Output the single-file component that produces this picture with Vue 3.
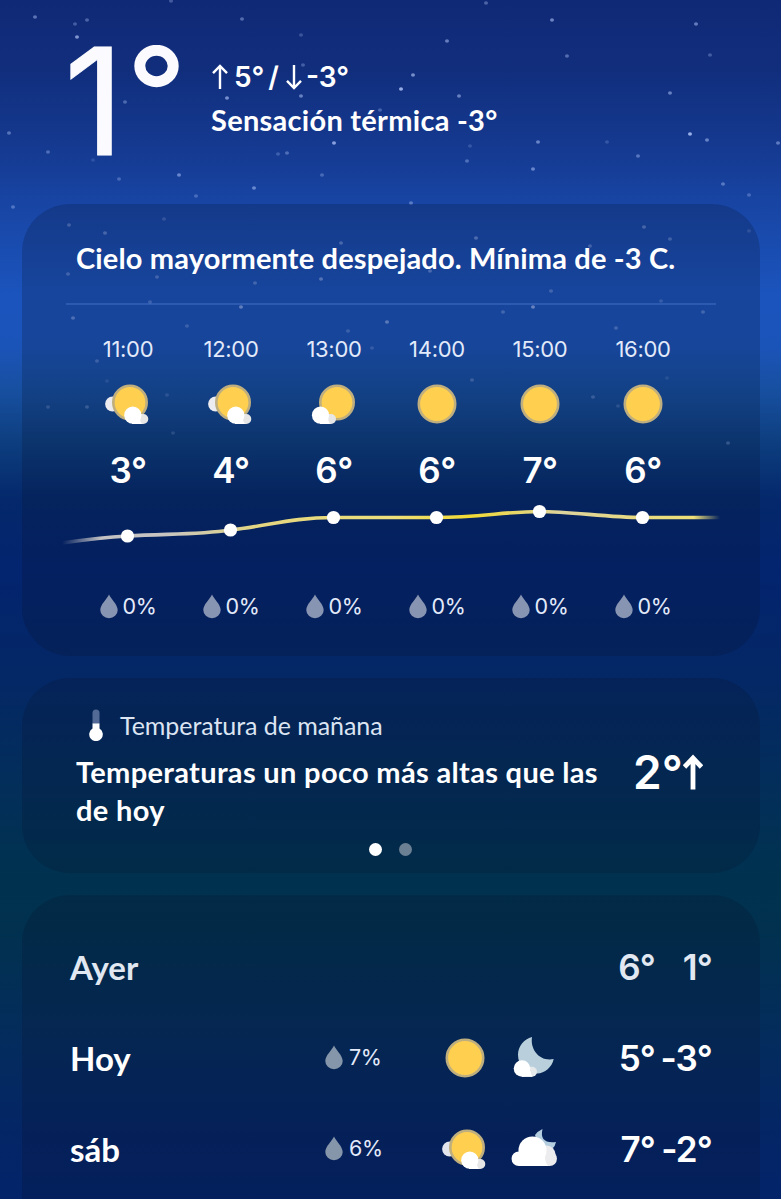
<script setup>
const hours = [
  { time: '11:00', icon: 'partly', temp: '3°', rain: '0%', y: 43 },
  { time: '12:00', icon: 'partly', temp: '4°', rain: '0%', y: 37 },
  { time: '13:00', icon: 'mostly', temp: '6°', rain: '0%', y: 24.5 },
  { time: '14:00', icon: 'sun', temp: '6°', rain: '0%', y: 24.5 },
  { time: '15:00', icon: 'sun', temp: '7°', rain: '0%', y: 18.5 },
  { time: '16:00', icon: 'sun', temp: '6°', rain: '0%', y: 24.5 },
]
const days = [
  { name: 'Ayer', high: '6°', low: '1°', past: true },
  { name: 'Hoy', rain: '7%', day: 'sun', night: 'moon', high: '5°', low: '-3°' },
  { name: 'sáb', rain: '6%', day: 'partly', night: 'cloud', high: '7°', low: '-2°' },
]
// x, y, opacity
const stars = [
  [35, 17, .45], [75, 24, .3], [87, 20, .35], [77, 37, .65], [171, 1, .3], [242, 19, .4], [301, 35, .25], [303, 65, .3],
  [125, 102, .35], [227, 98, .6], [301, 96, .5], [9, 133, .4], [48, 152, .35], [93, 160, .15], [179, 175, .5], [119, 179, .3],
  [254, 188, .5], [196, 196, .3], [334, 143, .7], [287, 153, .35], [278, 154, .25], [322, 175, .3], [13, 207, .35], [380, 110, .3],
  [413, 75, .6], [401, 89, .8], [459, 96, .5], [447, 41, .5], [486, 3, .35], [552, 20, .55], [567, 56, .4], [538, 142, .5],
  [533, 169, .5], [467, 161, .35], [470, 146, .2], [411, 203, .4], [638, 156, .4], [607, 142, .2], [670, 93, .5], [690, 134, .8],
  [707, 140, .5], [778, 143, .45], [723, 184, .4], [749, 195, .3], [696, 24, .5], [710, 55, .3], [69, 225, .35], [105, 233, .4],
  [164, 219, .25], [68, 274, .35], [157, 277, .35], [341, 243, .4], [321, 279, .5], [255, 283, .35], [241, 307, .6], [73, 318, .45],
  [150, 302, .3], [187, 326, .3], [387, 322, .55], [348, 331, .3], [372, 348, .25], [97, 361, .3], [87, 407, .3], [48, 407, .25],
  [107, 381, .15], [167, 395, .2], [476, 238, .45], [590, 246, .35], [644, 227, .4], [670, 239, .35], [749, 231, .2], [430, 271, .4],
  [551, 291, .35], [533, 307, .65], [503, 312, .35], [661, 301, .25], [703, 312, .35], [616, 328, .35], [472, 380, .3], [593, 397, .3],
  [618, 406, .2], [728, 443, .3], [667, 378, .15], [173, 433, .2],
]
</script>

<template>
  <main class="screen">
    <svg class="sky" viewBox="0 0 781 460" width="781" height="460" aria-hidden="true">
      <ellipse v-for="(s, i) in stars" :key="i" :cx="s[0]" :cy="s[1]" rx="2" ry="1.7" fill="#b9cdff" :opacity="s[2]" />
    </svg>

    <header class="now">
      <div class="big"><span class="one">1</span><svg class="ring" viewBox="0 0 46 43" width="46" height="43"><ellipse cx="22.5" cy="21" rx="16.7" ry="15.7" fill="none" stroke="#fafaff" stroke-width="11" /></svg></div>
      <div class="facts">
        <div class="range">
          <svg width="18" height="26" viewBox="0 0 18 26"><path d="M9 25V2M2 9.2L9 2l7 7.2" /></svg>
          <span class="r1">5°</span><span class="slash">/</span>
          <svg width="18" height="26" viewBox="0 0 18 26"><path d="M9 1v22M2 16.8L9 24l7-7.2" /></svg>
          <span class="r2">-3°</span>
        </div>
        <div class="feels">Sensación térmica -3°</div>
      </div>
    </header>

    <section class="card hourly">
      <h2>Cielo mayormente despejado. Mínima de -3 C.</h2>
      <div class="cols">
        <div v-for="h in hours" :key="h.time" class="col">
          <span class="time">{{ h.time }}</span>
          <svg class="wx" viewBox="0 0 48 44" width="48" height="44">
            <circle v-if="h.icon === 'sun'" cx="24" cy="22" r="18.2" class="sun" />
            <template v-else-if="h.icon === 'partly'">
              <circle cx="8.6" cy="22" r="7.5" fill="#ececf0" />
              <circle cx="26" cy="20.5" r="16.7" class="sun" />
              <path d="M28 32h11.3a5 5 0 0 1 0 10H28z" fill="#e6e6e6" />
              <circle cx="28.8" cy="33.2" r="8.6" fill="#fff" /><path d="M28 34h8q-1 4 2 8h-10z" fill="#fff" />
            </template>
            <template v-else>
              <circle cx="27" cy="20.5" r="16.7" class="sun" />
              <path d="M10 32h11a5 5 0 0 1 0 10H10z" fill="#e6e6e6" />
              <circle cx="10.5" cy="33.2" r="8.6" fill="#fff" /><path d="M10 36h8q0 3 2 6H10z" fill="#fff" />
            </template>
          </svg>
          <span class="temp">{{ h.temp }}</span>
        </div>
      </div>
      <svg class="chart" viewBox="0 0 738 70" width="738" height="70">
        <defs>
          <linearGradient id="line" gradientUnits="userSpaceOnUse" x1="40" y1="0" x2="698" y2="0">
            <stop offset="0" stop-color="#bcbcc4" stop-opacity="0" />
            <stop offset=".06" stop-color="#c3c2c4" />
            <stop offset=".16" stop-color="#c8c5c1" />
            <stop offset=".3" stop-color="#e4d680" />
            <stop offset=".5" stop-color="#eedf7c" />
            <stop offset=".62" stop-color="#f1d934" />
            <stop offset=".76" stop-color="#ddd39d" />
            <stop offset=".87" stop-color="#e8da82" />
            <stop offset=".96" stop-color="#efdf78" />
            <stop offset="1" stop-color="#efdf78" stop-opacity="0" />
          </linearGradient>
        </defs>
        <path d="M40 50Q78 44.5 105.5 43C143 40.5 175 42 208.5 37C246 33 270 24.5 311.5 24.5H414.5C456 24.5 485 18.5 517.5 18.5S585 24.5 620.5 24.5H698" fill="none" stroke="url(#line)" stroke-width="3.6" />
        <circle v-for="(h, i) in hours" :key="i" :cx="105.5 + i * 103" :cy="h.y" r="6.6" fill="#fff" />
      </svg>
      <div class="rains">
        <div v-for="h in hours" :key="h.time" class="rain">
          <svg width="18" height="25" viewBox="0 0 18 25"><path d="M9 .5C11 5 17.7 10.5 17.7 16a8.7 8.3 0 0 1-17.4 0C.3 10.5 7 5 9 .5z" /></svg><span>{{ h.rain }}</span>
        </div>
      </div>
    </section>

    <section class="card tomorrow">
      <div class="copy">
        <div class="label">
          <svg width="14" height="32" viewBox="0 0 14 32">
            <path d="M3.5 15V4a3.5 3.5 0 0 1 7 0v11z" fill="#526a95" />
            <path d="M3.5 14.5h7v5a6.8 6.8 0 1 1-7 0z" fill="#fff" />
          </svg>
          <span>Temperatura de mañana</span>
        </div>
        <p>Temperaturas un poco más altas que las<br>de hoy</p>
      </div>
      <div class="delta"><span>2°</span><svg width="20" height="36" viewBox="0 0 20 36"><path d="M10 35.5V4M1.5 13L10 4l8.5 9" /></svg></div>
      <div class="dots"><i></i><i class="off"></i></div>
    </section>

    <section class="card daily">
      <div v-for="d in days" :key="d.name" class="row" :class="{ past: d.past }">
        <span class="name">{{ d.name }}</span>
        <div class="rain day-rain"><template v-if="d.rain"><svg width="18" height="25" viewBox="0 0 18 25"><path d="M9 .5C11 5 17.7 10.5 17.7 16a8.7 8.3 0 0 1-17.4 0C.3 10.5 7 5 9 .5z" /></svg><span>{{ d.rain }}</span></template></div>
        <div class="slot">
          <svg v-if="d.day" viewBox="0 0 48 44" width="48" height="44">
            <circle v-if="d.day === 'sun'" cx="24" cy="22" r="18.2" class="sun" />
            <template v-else>
              <circle cx="8.6" cy="22" r="7.5" fill="#e2e5ec" />
              <circle cx="26" cy="20.5" r="16.7" class="sun" />
              <path d="M28 32h11.3a5 5 0 0 1 0 10H28z" fill="#e6e6e6" />
              <circle cx="28.8" cy="33.2" r="8.6" fill="#fff" /><path d="M28 34h8q-1 4 2 8h-10z" fill="#fff" />
            </template>
          </svg>
        </div>
        <div class="slot">
          <svg v-if="d.night" viewBox="0 0 48 44" width="48" height="44">
            <template v-if="d.night === 'moon'">
              <path d="M22 1C20 14 30 26 43.7 23C42 31 35 37.5 27 37.5C16 37.5 8 29 8 19C8 10 14 3 22 1z" fill="#b9d0dc" />
              <path d="M12 30.7h10a5 5 0 0 1 0 10H12z" fill="#e6e9ea" />
              <circle cx="12" cy="32.5" r="8.3" fill="#fff" /><path d="M12 35h8.5q.2 3 2 5.7H12z" fill="#fff" />
            </template>
            <template v-else>
              <path d="M32.5 2Q29 17 46 15Q44 26 30 24L25 8Q28 4 32.5 2z" fill="#b4cddf" />
              <circle cx="36.5" cy="27.5" r="9" fill="#ececee" />
              <path d="M30 24.5h9.700a7.250 7.250 0 0 1 0 14.500H30z" fill="#ececee" />
              <circle cx="22.500" cy="23.500" r="14" fill="#fff" />
              <path d="M8.800 24.500H35q-1 9 3 14.500H8.800a7.250 7.250 0 0 1 0-14.500z" fill="#fff" />
            </template>
          </svg>
        </div>
        <span class="high">{{ d.high }}</span>
        <span class="low">{{ d.low }}</span>
      </div>
    </section>
  </main>
</template>

<style>
body { margin: 0; background: #032468; }
</style>

<style scoped>
.screen {
  position: relative;
  box-sizing: border-box;
  width: 781px;
  height: 1199px;
  overflow: hidden;
  padding: 0 21px 0 22px;
  display: flex;
  flex-direction: column;
  gap: 22px;
  color: #fff;
  font-family: Lato, "Liberation Sans", sans-serif;
  background: linear-gradient(#102976 0, #112e7d 70px, #153a91 150px, #1845a4 204px, #1b54bd 295px, #1b54b9 345px, #174f9f 392px, #0d3e7f 442px, #04286b 500px, #03246f 570px, #042766 670px, #032e5b 780px, #00324f 880px, #01314f 930px, #042c5d 1040px, #042566 1140px, #032469 1199px);
}
.sky { position: absolute; left: 0; top: 0; filter: blur(.6px); }
.now { position: relative; flex: none; height: 182px; display: flex; }
.big { width: 189px; height: 182px; flex: none; display: flex; box-sizing: border-box; padding-left: 42px; font: 400 148px/204px Inter, sans-serif; color: #fafaff; }
.one { width: 70px; flex: none; -webkit-text-stroke: 1px #fafaff; }
.ring { margin-top: 45px; flex: none; }
.range { display: flex; align-items: center; height: 32px; margin-top: 61px; font: 600 28px/32px Inter, sans-serif; }
.range svg { flex: none; }
.range path { fill: none; stroke: #fff; stroke-width: 2.4; }
.r1 { margin-left: 5px; }
.slash { margin: 0 6px 0 4px; }
.r2 { margin-left: 3px; }
.feels { font-size: 29px; font-weight: 700; line-height: 40px; margin-top: 7px; white-space: nowrap; letter-spacing: .28px; }
.card { position: relative; flex: none; width: 738px; box-sizing: border-box; border-radius: 48px; background: rgba(8, 20, 44, .22); }
.hourly { height: 452px; }
h2 { margin: 0 44px; padding-left: 10px; height: 99px; line-height: 108px; font-size: 29px; font-weight: 700; letter-spacing: .15px; border-bottom: 2px solid rgba(105, 155, 235, .25); white-space: nowrap; }
.cols, .rains { display: grid; grid-template-columns: repeat(6, 103px); padding-left: 54px; }
.col { display: flex; flex-direction: column; align-items: center; }
.time { font: 400 22px/30px Inter, sans-serif; letter-spacing: -.3px; margin-top: 29px; margin-left: 1px; color: #e3eafa; }
.wx { margin-top: 18px; }
.sun { fill: #ffcf50; stroke: #bfae7e; stroke-width: 2.6; }
.temp { font: 600 35px/40px Inter, sans-serif; margin-top: 24px; margin-left: 1px; letter-spacing: -.5px; }
.chart { display: block; margin-top: 3px; }
.rains { margin-top: 31px; }
.rain { display: flex; align-items: center; height: 25px; justify-content: center; font: 400 21.5px/25px Inter, sans-serif; color: #e3eafa; }
.rains .rain { margin-left: 2px; }
.rain path { fill: #8795b2; }
.rain span { margin-left: 4px; letter-spacing: -.3px; }
.tomorrow { height: 195px; }
.copy { padding: 30px 0 0 54px; }
.label { display: flex; align-items: center; height: 34px; font-size: 25px; color: #dce4f2; letter-spacing: -.06px; }
.label svg { margin-left: 13px; }
.label span { margin-left: 17px; }
p { margin: 11px 0 0; font-size: 29px; line-height: 38px; font-weight: 700; letter-spacing: .33px; white-space: nowrap; }
.delta { position: absolute; left: 611px; top: 68px; display: flex; align-items: center; font: 600 46px/52px Inter, sans-serif; }
.delta path { fill: none; stroke: #fff; stroke-width: 4.8; }
.dots { position: absolute; left: 347px; top: 165px; display: flex; gap: 17px; }
.dots i { width: 13px; height: 13px; border-radius: 50%; background: #fff; }
.dots .off { background: #6c8093; }
.daily { height: 360px; padding: 26px 48px 0; }
.row { display: grid; grid-template-columns: 255px 116px 69px 64px 82px 57px; height: 91px; align-items: center; white-space: nowrap; }
.past { color: #e1e8f1; }
.name { font-size: 33px; font-weight: 700; }
.day-rain { justify-content: flex-start; }
.day-rain span { margin-left: 6px; }
.day-rain path { fill: #8596aa; }
.slot, .slot svg { height: 44px; display: block; }
.high, .low { font: 600 35px/40px Inter, sans-serif; letter-spacing: -.8px; text-align: right; }
.high { margin-right: 1px; }
.low { margin-right: 1px; }
</style>
